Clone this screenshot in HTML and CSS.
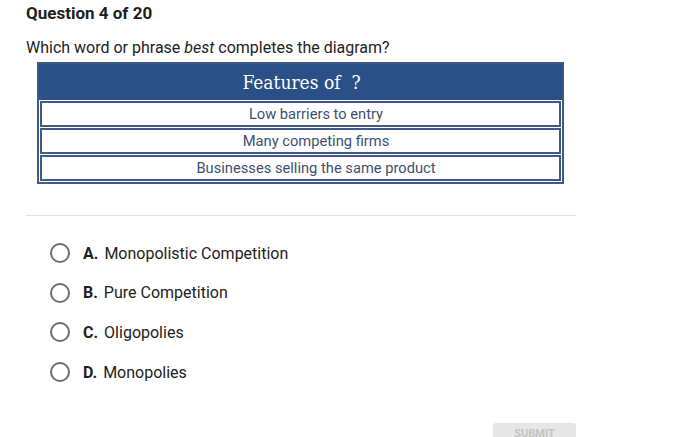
FILE: index.html
```html
<!DOCTYPE html>
<html>
<head>
<meta charset="utf-8">
<link rel="stylesheet" href="styles.css">
</head>
<body>
<div class="page">
  <h1 class="qnum">Question 4 of 20</h1>
  <p class="prompt">Which word or phrase <em>best</em> completes the diagram?</p>
  <div class="diagram">
    <div class="dhead">Features of&nbsp; ?</div>
    <div class="drow">Low barriers to entry</div>
    <div class="drow">Many competing firms</div>
    <div class="drow">Businesses selling the same product</div>
  </div>
  <hr class="sep">
  <ul class="options">
    <li class="opt"><span class="radio"></span><b>A.</b><span>Monopolistic Competition</span></li>
    <li class="opt"><span class="radio"></span><b>B.</b><span>Pure Competition</span></li>
    <li class="opt"><span class="radio"></span><b>C.</b><span>Oligopolies</span></li>
    <li class="opt"><span class="radio"></span><b>D.</b><span>Monopolies</span></li>
  </ul>
  <div class="actions"><button class="submit">SUBMIT</button></div>
</div>
</body>
</html>
```
FILE: styles.css
```css
html, body { margin: 0; padding: 0; background: #fff; }
body { font-family: Roboto, "Liberation Sans", sans-serif; color: #222; overflow: hidden; }
.page { width: 550px; padding: 3px 0 0 26px; }
.qnum { margin: 0; font-size: 17px; font-weight: 700; line-height: 20px; color: #1e1e1e; }
.prompt { margin: 15px 0 0; font-size: 16px; line-height: 19px; color: #222; }
.prompt em { font-style: italic; }
.diagram { margin: 5px 0 0 11px; width: 523px; border: 2px solid #3f5b85; background: #fff; display: flex; flex-direction: column; gap: 1px; padding-bottom: 1px; }
.dhead { background: #2b5087; color: #fff; height: 36px; display: flex; align-items: center; justify-content: center; font-family: "DejaVu Serif", serif; font-stretch: condensed; font-size: 19px; padding-left: 2px; }
.drow { height: 22px; border: 2px solid #3f5b85; margin: 0 1px; display: flex; align-items: center; justify-content: center; padding-left: 31px; font-size: 14.7px; line-height: 17px; color: #3e5070; }
.sep { margin: 31px 0 0; border: 0; height: 1px; background: #e2e2e2; }
.options { list-style: none; margin: 26px 0 0; padding: 0 0 0 24px; display: flex; flex-direction: column; gap: 17.7px; }
.opt { display: flex; align-items: center; height: 22px; font-size: 16px; color: #222; }
.radio { width: 16px; height: 16px; border: 2px solid #6e6e6e; border-radius: 50%; margin-right: 13px; }
.opt b { font-weight: 700; margin-right: 6px; }
.actions { display: flex; justify-content: flex-end; margin-top: 40px; }
.submit { width: 83px; height: 30px; border: 0; border-radius: 3px; background: #e6e6e6; color: #c4c4c4; font-family: Roboto, sans-serif; font-size: 11px; font-weight: 700; padding: 0; padding-bottom: 10px; }
```
